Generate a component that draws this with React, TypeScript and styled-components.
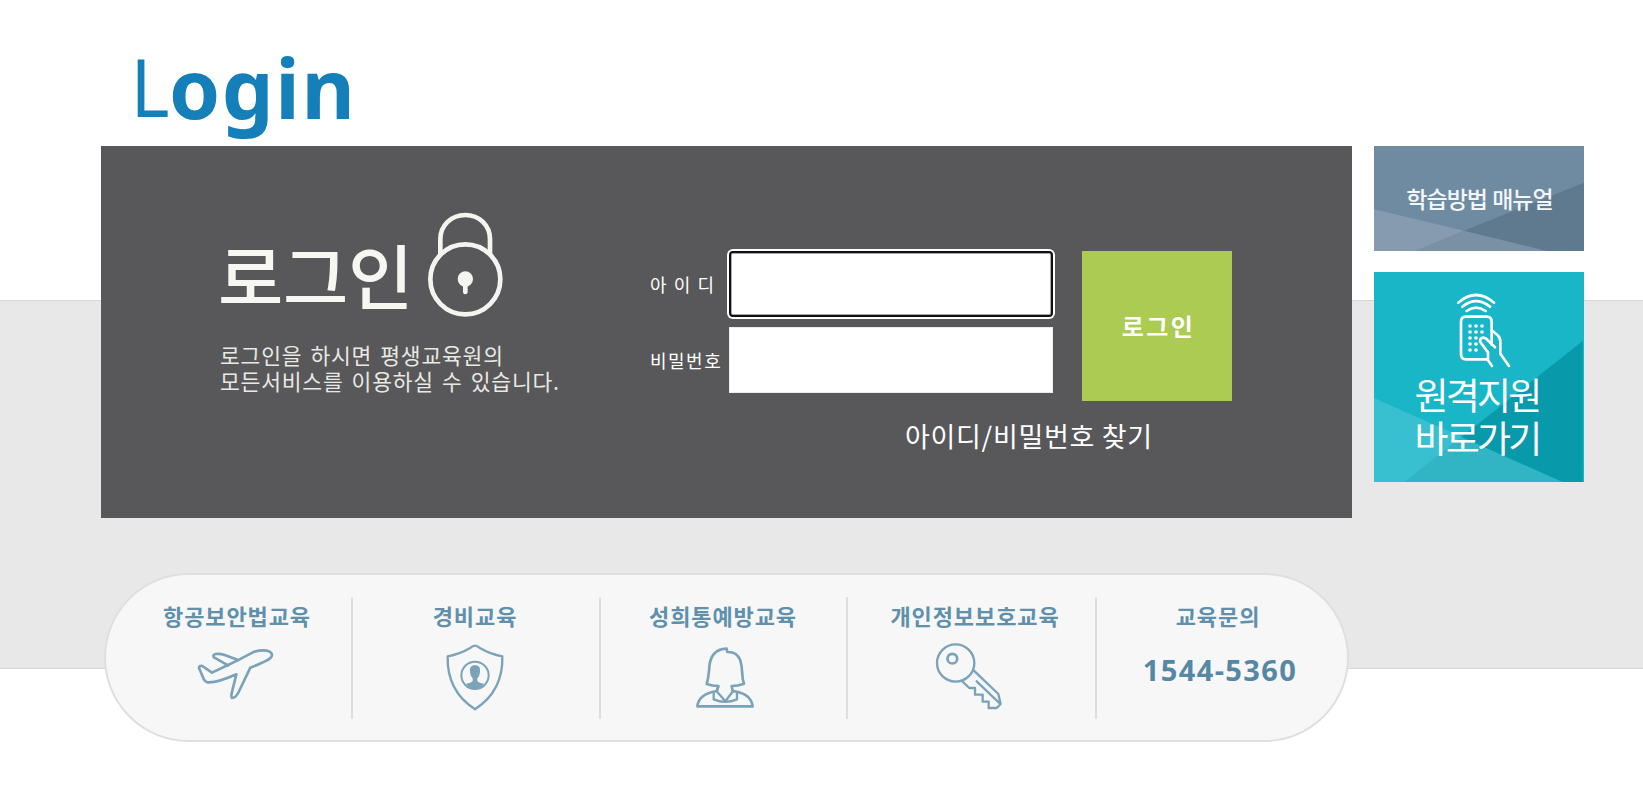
import React from "react";
import styled, { createGlobalStyle } from "styled-components";

const GlobalStyle = createGlobalStyle`
  * { box-sizing: border-box; }
  body {
    margin: 0;
    background: #fff;
    font-family: "Noto Sans CJK KR", "Noto Sans", sans-serif;
  }
  button, input { font: inherit; }
`;

const Page = styled.div`
  width: 1643px;
  height: 799px;
  padding-left: 101px;
  overflow: hidden;
  background: linear-gradient(
    #fff 300px, #d6d6d6 300px, #d6d6d6 301px, #e8e8e8 301px,
    #e8e8e8 668px, #d6d6d6 668px, #d6d6d6 669px, #fff 669px
  );
`;

const PageTitle = styled.h1`
  height: 146px;
  margin: 0;
  padding: 30px 0 0 29px;
  font-family: "Noto Sans", sans-serif;
  font-size: 82px;
  line-height: 114px;
  font-weight: 700;
  letter-spacing: 1.6px;
  color: #157fba;
`;

const TitleInitial = styled.span`
  display: inline-block;
  width: 39px;
  font-size: 80px;
  font-weight: 400;
  transform: translateY(-2px) scaleX(0.93);
  transform-origin: 8px 0;
`;

const Main = styled.main`
  display: flex;
  align-items: flex-start;
  gap: 22px;
`;

const LoginPanel = styled.section`
  display: flex;
  width: 1251px;
  height: 372px;
  background: #58585a;
`;

const Intro = styled.div`
  width: 549px;
  padding: 66px 0 0 119px;
`;

const IntroHead = styled.div`
  display: flex;
  height: 105px;
`;

const IntroTitle = styled.h2`
  width: 209px;
  margin: 21px 0 0 -2px;
  font-size: 71px;
  line-height: 80px;
  font-weight: 500;
  letter-spacing: -0.3px;
  white-space: nowrap;
  color: #f7f7f2;
`;

const IntroText = styled.p`
  margin: 25px 0 0;
  font-size: 21.5px;
  line-height: 25.5px;
  letter-spacing: 0.8px;
  word-spacing: 2.5px;
  white-space: nowrap;
  color: #e9e9e4;
`;

const Form = styled.form`
  padding-top: 105px;
`;

const FormBody = styled.div`
  display: flex;
  gap: 29px;
`;

const Fields = styled.div`
  display: flex;
  flex-direction: column;
  gap: 10px;
`;

const Field = styled.label`
  display: flex;
  align-items: center;
  height: 66px;
`;

const FieldName = styled.span<{ $spacing: string }>`
  width: 79px;
  font-size: 18px;
  line-height: 24px;
  letter-spacing: ${(p) => p.$spacing};
  white-space: pre;
  color: #fff;
`;

const TextInput = styled.input<{ $active?: boolean }>`
  width: 324px;
  height: 66px;
  padding: 0 12px;
  outline: none;
  background: #fff;
  border: ${(p) => (p.$active ? "2px solid #101010" : "1px solid #ececec")};
  border-radius: ${(p) => (p.$active ? "4px" : "0")};
  box-shadow: ${(p) => (p.$active ? "0 0 0 2px #fff, inset 0 0 0 1px #aaa" : "none")};
`;

const SubmitButton = styled.button`
  width: 150px;
  height: 150px;
  padding: 0 0 1px 3px;
  border: 0;
  background: #abcb52;
  color: #fff;
  font-size: 24px;
  font-weight: 700;
  letter-spacing: 2.4px;
`;

const FindLink = styled.a`
  display: block;
  margin: 15px 0 0 255px;
  font-size: 27px;
  line-height: 40px;
  letter-spacing: 0.7px;
  white-space: nowrap;
  color: #fff;
`;

const SideLinks = styled.aside`
  display: flex;
  flex-direction: column;
  gap: 21px;
`;

const Tile = styled.a<{ $height: number; $color: string }>`
  position: relative;
  display: flex;
  flex-direction: column;
  align-items: center;
  width: 210px;
  height: ${(p) => p.$height}px;
  background: ${(p) => p.$color};
  color: #fff;
`;

const Facets = styled.svg`
  position: absolute;
  inset: 0;
  width: 100%;
  height: 100%;
`;

const ManualLabel = styled.span`
  position: relative;
  padding: 36px 0 0 1px;
  font-size: 23px;
  line-height: 32px;
  font-weight: 500;
  letter-spacing: -1px;
  word-spacing: 1px;
  white-space: nowrap;
  color: #f3f6f8;
`;

const RemoteGlyph = styled.svg`
  position: relative;
  margin: 20px 0 0 8px;
`;

const RemoteLabel = styled.span`
  position: relative;
  margin: 5px 4px 0 0;
  font-size: 37px;
  line-height: 43px;
  font-weight: 400;
  letter-spacing: -2.8px;
  white-space: nowrap;
`;

const QuickMenu = styled.nav`
  display: flex;
  width: 1245px;
  height: 169px;
  margin: 55px 0 0 3px;
  padding-top: 22px;
  border: 2px solid #dfdfdf;
  border-radius: 85px;
  background: #f7f7f7;
`;

const QuickItem = styled.a<{ $width: number; $shift: number; $last?: boolean }>`
  display: flex;
  flex-direction: column;
  align-items: center;
  width: ${(p) => p.$width}px;
  height: 122px;
  padding-left: ${(p) => Math.max(p.$shift, 0)}px;
  padding-right: ${(p) => Math.max(-p.$shift, 0)}px;
  border-right: ${(p) => (p.$last ? "0" : "2px solid #dedede")};
`;

const QuickTitle = styled.span`
  height: 46px;
  padding-top: 2px;
  font-size: 22px;
  line-height: 32px;
  font-weight: 700;
  letter-spacing: 0.9px;
  white-space: nowrap;
  color: #6090ac;
`;

const QuickIcon = styled.svg<{ $top: number; $left?: number }>`
  margin-top: ${(p) => p.$top}px;
  margin-left: ${(p) => p.$left ?? 0}px;
  fill: none;
  stroke: #7aa3b9;
  stroke-width: 8;
  stroke-linejoin: round;
  stroke-linecap: round;
`;

const Phone = styled.strong`
  margin-top: 7px;
  margin-left: 4px;
  font-family: "Noto Sans", sans-serif;
  font-size: 29px;
  line-height: 40px;
  font-weight: 700;
  letter-spacing: 1.4px;
  color: #5588a5;
`;

const LockIcon = () => (
  <svg width="77" height="105" viewBox="682 36 231 315" fill="none" stroke="#f5f5ef" strokeWidth="14">
    <circle cx="797" cy="238" r="105" />
    <path d="M722 164V118C722 76 755 45 797 45S871 76 871 118V164" />
    <circle cx="797" cy="237" r="23" fill="#f5f5ef" stroke="none" />
    <path d="M797 240V276" strokeLinecap="round" />
  </svg>
);

const RemoteIcon = () => (
  <RemoteGlyph width="55" height="76" viewBox="286 94 165 228" fill="none" stroke="#fff" strokeWidth="8" strokeLinecap="round" strokeLinejoin="round">
    <path d="M293 126Q346 80 400 126M305 138Q346 105 388 138M318 151Q346 131 375 151" />
    <path d="M380 296H316Q301 296 301 281V184Q301 168 316 168H378Q393 168 393 184V252" />
    <path d="M393 209L411 224Q419 231 419 242V279L445 316M403 260L375 233Q366 228 360 234Q356 239 361 247L382 275V299L394 316" />
    <g fill="#fff" stroke="none">
      {[196, 214, 232, 250, 268].map((y, row) =>
        [328, 346, 364].slice(0, row < 2 ? 3 : 2).map((x) => <circle key={`${x}-${y}`} cx={x} cy={y} r="5.5" />)
      )}
    </g>
  </RemoteGlyph>
);

const PlaneIcon = () => (
  <QuickIcon $top={3} $left={-5} width="78" height="56" viewBox="315 258 234 168">
    <path d="M324 324Q324 316 334 318L363 338L411 315L440 301L490 275Q519 267 536 275Q549 284 538 294Q529 303 478 323L443 396Q434 414 423 414Q420 411 422 400L436 343Q379 369 349 367Q342 365 339 359L324 324Z" />
    <path d="M411 316L369 292Q363 285 374 282Q387 280 401 285L441 300" />
  </QuickIcon>
);

const ShieldIcon = () => (
  <QuickIcon $top={0} $left={-1} width="60" height="69" viewBox="224 251 180 207">
    <path d="M314 259Q310 258 298 267Q268 285 232 291Q229 395 314 450Q399 395 396 291Q360 285 330 267Q318 258 314 259Z" strokeWidth="7" />
    <circle cx="314" cy="348" r="41" strokeWidth="6" />
    <path d="M314 318C301 318 298 325 299 339Q300 350 307 357V365Q302 371 287 373Q297 387 314 388Q331 387 341 373Q326 371 321 365V357Q328 350 329 339C330 325 327 318 314 318Z" fill="#7aa3b9" stroke="none" />
  </QuickIcon>
);

const WomanIcon = () => (
  <QuickIcon $top={3} $left={3} width="60" height="63" viewBox="285 260 180 189">
    <path d="M355 380Q337 380 320 374Q325 359 327 335Q328 302 340 286Q355 268 380 268L382 278Q411 277 421 303Q426 320 427 345Q427 360 432 373Q414 380 395 380L398 395Q453 402 458 441H292Q296 404 350 395L355 380Z" />
    <path d="M341 400V420Q375 435 411 420V400M350 396L376 426L399 396M355 381Q354 390 350 396" strokeWidth="7" />
  </QuickIcon>
);

const KeyIcon = () => (
  <QuickIcon $top={-1} $left={-13} width="68" height="69" viewBox="287 248 204 207">
    <circle cx="349" cy="311" r="56" strokeWidth="7" />
    <circle cx="339" cy="298" r="14.5" />
    <path d="M403 333L477 404L484 434L472 446H448V427H430V406H407V386H390L369 366M412 366L483 434" strokeWidth="7" />
  </QuickIcon>
);

export default function App() {
  return (
    <>
      <GlobalStyle />
      <Page>
        <PageTitle><TitleInitial>L</TitleInitial>ogin</PageTitle>
        <Main>
          <LoginPanel>
            <Intro>
              <IntroHead>
                <IntroTitle>로그인</IntroTitle>
                <LockIcon />
              </IntroHead>
              <IntroText>
                로그인을 하시면 평생교육원의<br />
                모든서비스를 이용하실 수 있습니다.
              </IntroText>
            </Intro>
            <Form>
              <FormBody>
                <Fields>
                  <Field>
                    <FieldName $spacing="1.6px">아 이 디</FieldName>
                    <TextInput $active type="text" />
                  </Field>
                  <Field>
                    <FieldName $spacing="1.5px">비밀번호</FieldName>
                    <TextInput type="password" />
                  </Field>
                </Fields>
                <SubmitButton type="button">로그인</SubmitButton>
              </FormBody>
              <FindLink>아이디/비밀번호 찾기</FindLink>
            </Form>
          </LoginPanel>
          <SideLinks>
            <Tile $height={105} $color="#6f8ba2">
              <Facets viewBox="0 0 630 315">
                <path fill="#869bb0" d="M0 190L270 254L125 315H0Z" />
                <path fill="#7a90a5" d="M270 254L520 315H125Z" />
                <path fill="#5f798f" d="M270 254L630 110V315H520Z" />
              </Facets>
              <ManualLabel>학습방법 매뉴얼</ManualLabel>
            </Tile>
            <Tile $height={210} $color="#19b6c8">
              <Facets viewBox="0 0 630 630">
                <path fill="#38c0d1" d="M0 378L263 495L92 630H0Z" />
                <path fill="#31b5c5" d="M263 495L566 630H92Z" />
                <path fill="#0899aa" d="M263 495L626 207V630H566Z" />
              </Facets>
              <RemoteIcon />
              <RemoteLabel>원격지원<br />바로가기</RemoteLabel>
            </Tile>
          </SideLinks>
        </Main>
        <QuickMenu>
          <QuickItem $width={247} $shift={17}>
            <QuickTitle>항공보안법교육</QuickTitle>
            <PlaneIcon />
          </QuickItem>
          <QuickItem $width={248} $shift={-2}>
            <QuickTitle>경비교육</QuickTitle>
            <ShieldIcon />
          </QuickItem>
          <QuickItem $width={247} $shift={-1}>
            <QuickTitle>성희통예방교육</QuickTitle>
            <WomanIcon />
          </QuickItem>
          <QuickItem $width={249} $shift={7}>
            <QuickTitle>개인정보보호교육</QuickTitle>
            <KeyIcon />
          </QuickItem>
          <QuickItem $width={250} $shift={-8} $last>
            <QuickTitle>교육문의</QuickTitle>
            <Phone>1544-5360</Phone>
          </QuickItem>
        </QuickMenu>
      </Page>
    </>
  );
}
